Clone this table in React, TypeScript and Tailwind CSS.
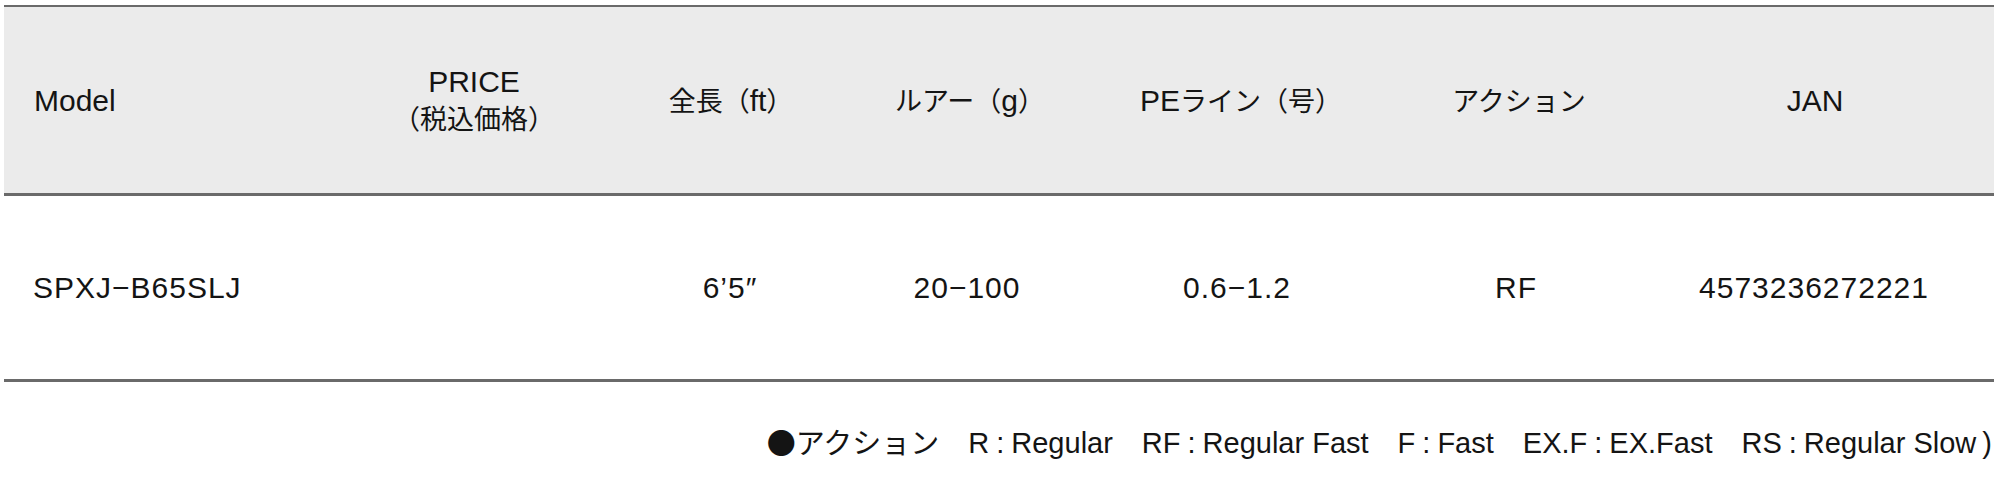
import React from "react";

const font = { fontFamily: '"Liberation Sans", "Noto Sans CJK JP", sans-serif' };
const cjk = { fontFamily: '"Noto Sans CJK JP", sans-serif' };

const J = ({ children }: { children: React.ReactNode }) => (
  <span className="text-[27px]" style={cjk}>
    {children}
  </span>
);

const headers: React.ReactNode[] = [
  "Model",
  <span className="flex flex-col items-center leading-[36px]">
    <span>PRICE</span>
    <J>（税込価格）</J>
  </span>,
  <span>
    <J>全長（</J>ft<J>）</J>
  </span>,
  <span>
    <J>ルアー（</J>g<J>）</J>
  </span>,
  <span>
    PE<J>ライン（号）</J>
  </span>,
  <J>アクション</J>,
  "JAN",
];

const values = ["SPXJ−B65SLJ", "", "6’5″", "20−100", "0.6−1.2", "RF", "4573236272221"];

const C = () => <span className="mx-[7px]">:</span>;

export default function App() {
  return (
    <div className="w-[2000px] h-[477px] bg-white text-[#141414]" style={font}>
      <div className="pl-[4px] pr-[6px] pt-[5px]">
        <div className="border-t-2 border-b-[3px] border-[#6a6a6a] bg-[#ebebeb] h-[191px] grid grid-cols-[342px_256px_258px_220px_322px_234px_358px] items-center text-[30px]">
          {headers.map((h, i) => (
            <div
              key={i}
              className={i === 0 ? "pl-[30px] text-left" : "flex justify-center text-center"}
            >
              {h}
            </div>
          ))}
        </div>
        <div className="border-b-[3px] border-[#6a6a6a] h-[186px] grid grid-cols-[342px_256px_256px_218px_322px_236px_360px] items-center text-[30px] tracking-[1px]">
          {values.map((v, i) => (
            <div key={i} className={i === 0 ? "pl-[29px] text-left" : "text-center"}>
              {v}
            </div>
          ))}
        </div>
        <div className="flex justify-end items-center gap-[29px] pt-[38px] pr-[2px] text-[29px] whitespace-nowrap">
          <span>
            <span style={cjk}>●アクション</span>
          </span>
          <span>
            R<C />Regular
          </span>
          <span>
            RF<C />Regular Fast
          </span>
          <span>
            F<C />Fast
          </span>
          <span>
            EX.F<C />EX.Fast
          </span>
          <span>
            RS<C />Regular Slow<span className="ml-[6px]">)</span>
          </span>
        </div>
      </div>
    </div>
  );
}
